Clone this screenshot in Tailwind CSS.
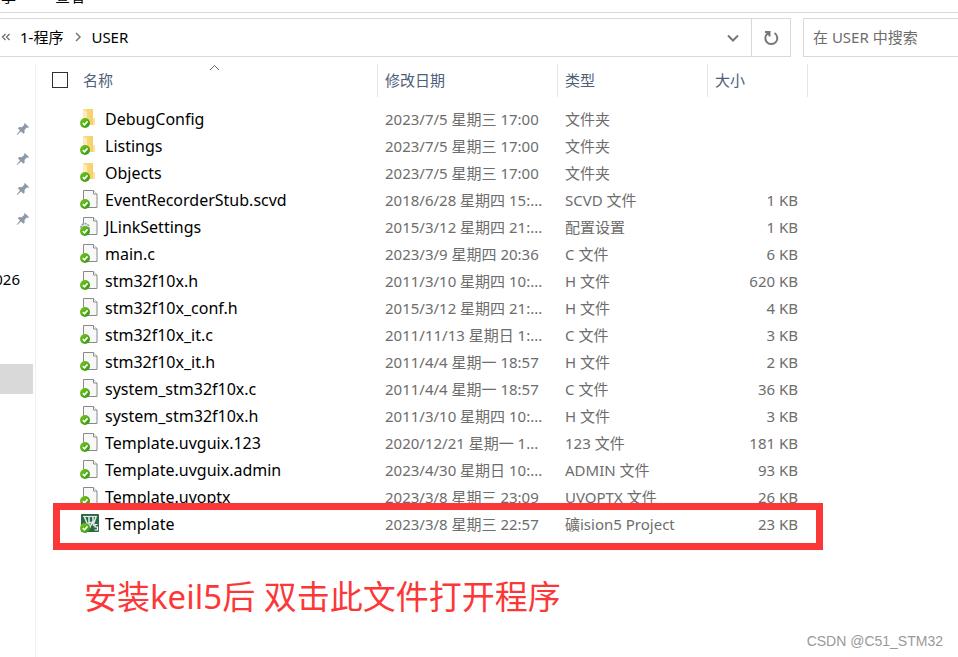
<!DOCTYPE html>
<html lang="zh-CN">
<head>
    <meta charset="UTF-8">
    <meta name="viewport" content="width=device-width, initial-scale=1.0">
    <title>USER</title>
    <script src="https://cdn.jsdelivr.net/npm/@tailwindcss/browser@4"></script>
</head>
<body class="bg-white text-black text-[15px] leading-5 font-['Noto_Sans','Noto_Sans_CJK_SC',sans-serif] overflow-hidden min-h-screen flex flex-col">
    <!-- icons -->
    <svg class="absolute w-0 h-0">
        <defs>
            <linearGradient id="green" x1="0" y1="0" x2="1" y2="1">
                <stop offset="0" stop-color="#7cc820"/>
                <stop offset="1" stop-color="#2f9410"/>
            </linearGradient>
            <linearGradient id="yellow" x1="0" y1="0" x2="1" y2="0">
                <stop offset="0" stop-color="#fbdd8a"/>
                <stop offset="1" stop-color="#f6cf68"/>
            </linearGradient>
        </defs>
        <symbol id="badge" viewBox="0 0 20 20">
            <circle cx="5" cy="14" r="5" fill="url(#green)"/>
            <path d="M2.8 14.2l1.700 1.600 3-3.400" fill="none" stroke="#fff" stroke-width="1.600"/>
        </symbol>
        <symbol id="folder" viewBox="0 0 20 20">
            <path d="M3 0h10v16H4z" fill="url(#yellow)"/>
            <path d="M13 9h2v7h-2z" fill="#fbe3a0"/>
            <path d="M3 0l4 3v13l-4-2z" fill="#fdebb8"/>
            <use href="#badge"/>
        </symbol>
        <symbol id="file" viewBox="0 0 20 20">
            <path d="M3.500 .5h10l3.500 3.500v13.500h-13.500z" fill="#f8f8f8" stroke="#8a8a8a"/>
            <path d="M13.500 .5v3.500h3.500" fill="#fff" stroke="#8a8a8a"/>
            <use href="#badge"/>
        </symbol>
        <symbol id="config" viewBox="0 0 20 20">
            <path d="M3.500 .5h10l3.500 3.500v13.500h-13.500z" fill="#f8f8f8" stroke="#8a8a8a"/>
            <path d="M13.500 .5v3.500h3.500" fill="#fff" stroke="#8a8a8a"/>
            <circle cx="5" cy="10.500" r="4" fill="#dfe5ea" stroke="#8f9aa5" stroke-width="1.500" stroke-dasharray="2 1"/>
            <use href="#badge"/>
        </symbol>
        <symbol id="keil" viewBox="0 0 20 20">
            <rect x="1" y="0" width="18" height="18" rx="1" fill="#2b6645"/>
            <path d="M3 2.500h14" stroke="#dbe9e0" stroke-width="1.200"/>
            <path d="M4.500 3l4.500 11V3M9 8.500h4M13 3v6M9.500 14l3-6 1.500 4M16 3l-2.500 7" fill="none" stroke="#dbe9e0" stroke-width="1.600"/>
            <path d="M17.500 10.500h-2.500v2.500h2.500v3h-3" fill="none" stroke="#fff" stroke-width="1.200"/>
            <use href="#badge"/>
        </symbol>
        <symbol id="pin" viewBox="0 0 14 14">
            <path d="M8.500 .8l4.700 4.400-1.400 .6-1 -.2-2.300 2.500 .2 2.400-1.300 1.200-2.300-2.300L1 13 .6 12.600 4 8.400 1.900 6.200l1.300-1.200 2.500 .2L8.200 3z" fill="#8d99a6"/>
        </symbol>
    </svg>

    <nav class="h-[13px] border-b border-[#dadada] flex shrink-0 items-end pb-[6px] gap-[39px] -ml-[14px]">
        <a href="#">共享</a>
        <a href="#">查看</a>
    </nav>

    <div class="flex h-[39px] mt-[5px] shrink-0">
        <div class="flex flex-1 border border-l-0 border-[#d9d9d9]">
            <div class="flex flex-1 items-center pb-[2px]">
                <svg class="w-5 h-5 text-[#666]" viewBox="0 0 20 20" fill="none" stroke="currentColor" stroke-width="1.200"><path d="M5.500 7L2.500 10l3 3M9.500 7L6.500 10l3 3"/></svg>
                <a href="#">1-程序</a>
                <svg class="w-7 h-5" viewBox="0 0 28 20" fill="none" stroke="#777" stroke-width="1.500"><path d="M13 6l4 4-4 4"/></svg>
                <a href="#">USER</a>
            </div>
            <button class="w-9 flex items-center justify-center" aria-label="历史记录">
                <svg class="w-3 h-3" viewBox="0 0 12 12" fill="none" stroke="#777" stroke-width="2"><path d="M1 3.500l5 5 5-5"/></svg>
            </button>
            <button class="w-[39px] border-l border-[#d9d9d9] flex items-center justify-center" aria-label="刷新">
                <svg class="w-4 h-4" viewBox="0 0 16 16" fill="none" stroke="#777" stroke-width="2"><path d="M11.500 3a6 6 0 1 1-6-.2M2 2h4.500v4.500"/></svg>
            </button>
        </div>
        <input type="text" aria-label="搜索" placeholder="在 USER 中搜索" class="w-[155px] ml-3 pl-[9px] pb-[2px] border border-r-0 border-[#d9d9d9] placeholder:text-[#6d6d6d] outline-none">
    </div>

    <div class="flex flex-1 mt-[7px]">
        <aside class="w-9 shrink-0 border-r border-[#f0f0f0] pt-[50px] overflow-hidden">
            <div class="h-[30px] flex items-center justify-end pr-[5px]"><svg class="w-[14px] h-[14px]"><use href="#pin"/></svg></div>
            <div class="h-[30px] flex items-center justify-end pr-[5px]"><svg class="w-[14px] h-[14px]"><use href="#pin"/></svg></div>
            <div class="h-[30px] flex items-center justify-end pr-[5px]"><svg class="w-[14px] h-[14px]"><use href="#pin"/></svg></div>
            <div class="h-[30px] flex items-center justify-end pr-[5px]"><svg class="w-[14px] h-[14px]"><use href="#pin"/></svg></div>
            <div class="h-[30px] mt-[30px] flex items-center justify-end pr-[15px]">026</div>
            <div class="h-[30px] mt-[70px] mr-[2px] bg-[#d9d9d9]"></div>
        </aside>

        <main class="relative flex-1">
            <table class="table-fixed border-separate border-spacing-0 w-[772px] whitespace-nowrap">
                <thead class="text-[#4c607a] text-left">
                    <tr class="h-[33px]">
                        <th class="relative w-[342px] p-0 pl-4 pb-[2px] border-r border-[#e5e5e5] font-normal">
                            <div class="flex items-center">
                                <input type="checkbox" aria-label="全选" class="appearance-none w-4 h-4 mr-[15px] border border-[#333] bg-white">
                                名称
                            </div>
                            <svg class="absolute top-0 left-[173px] w-[11px] h-[7px]" viewBox="0 0 11 7" fill="none" stroke="#666"><path d="M1 6l4.500-4.500L10 6"/></svg>
                        </th>
                        <th class="w-[180px] p-0 pl-[7px] pb-[2px] border-r border-[#e5e5e5] font-normal">修改日期</th>
                        <th class="w-[150px] p-0 pl-[7px] pb-[2px] border-r border-[#e5e5e5] font-normal">类型</th>
                        <th class="w-[100px] p-0 pl-[7px] pb-[2px] border-r border-[#e5e5e5] font-normal">大小</th>
                    </tr>
                    <tr class="h-2"></tr>
                </thead>
                <tbody id="files"></tbody>
            </table>

            <div class="absolute left-[17px] top-[439px] w-[770px] h-[47px] border-[7px] border-[#fc3737]"></div>
            <p class="absolute left-12 top-[509px] text-[33px] leading-[48px] text-[#fc3737] whitespace-nowrap">安装keil5后 双击此文件打开程序</p>
            <p class="absolute right-[15px] bottom-[6px] text-[14px] leading-5 text-[#999] font-['Liberation_Sans',sans-serif]">CSDN @C51_STM32</p>
        </main>
    </div>

    <script>
        const files = [
            ['folder', 'DebugConfig', '2023/7/5 星期三 17:00', '文件夹', ''],
            ['folder', 'Listings', '2023/7/5 星期三 17:00', '文件夹', ''],
            ['folder', 'Objects', '2023/7/5 星期三 17:00', '文件夹', ''],
            ['file', 'EventRecorderStub.scvd', '2018/6/28 星期四 15:...', 'SCVD 文件', '1 KB'],
            ['config', 'JLinkSettings', '2015/3/12 星期四 21:...', '配置设置', '1 KB'],
            ['file', 'main.c', '2023/3/9 星期四 20:36', 'C 文件', '6 KB'],
            ['file', 'stm32f10x.h', '2011/3/10 星期四 10:...', 'H 文件', '620 KB'],
            ['file', 'stm32f10x_conf.h', '2015/3/12 星期四 21:...', 'H 文件', '4 KB'],
            ['file', 'stm32f10x_it.c', '2011/11/13 星期日 1:...', 'C 文件', '3 KB'],
            ['file', 'stm32f10x_it.h', '2011/4/4 星期一 18:57', 'H 文件', '2 KB'],
            ['file', 'system_stm32f10x.c', '2011/4/4 星期一 18:57', 'C 文件', '36 KB'],
            ['file', 'system_stm32f10x.h', '2011/3/10 星期四 10:...', 'H 文件', '3 KB'],
            ['file', 'Template.uvguix.123', '2020/12/21 星期一 1...', '123 文件', '181 KB'],
            ['file', 'Template.uvguix.admin', '2023/4/30 星期日 10:...', 'ADMIN 文件', '93 KB'],
            ['file', 'Template.uvoptx', '2023/3/8 星期三 23:09', 'UVOPTX 文件', '26 KB'],
            ['keil', 'Template', '2023/3/8 星期三 22:57', '礦ision5 Project', '23 KB']
        ];

        document.getElementById('files').innerHTML = files.map(([icon, name, date, type, size]) => `
            <tr class="h-[27px] text-[#6d6d6d]">
                <td class="p-0 pl-11 text-[16px] text-black">
                    <div class="flex items-center gap-[5px]">
                        <svg class="w-5 h-5 shrink-0"><use href="#${icon}"/></svg>${name}
                    </div>
                </td>
                <td class="p-0 pl-[7px]">${date}</td>
                <td class="p-0 pl-[7px]">${type}</td>
                <td class="p-0 pr-[10px] text-right">${size}</td>
            </tr>`).join('');
    </script>
</body>
</html>
